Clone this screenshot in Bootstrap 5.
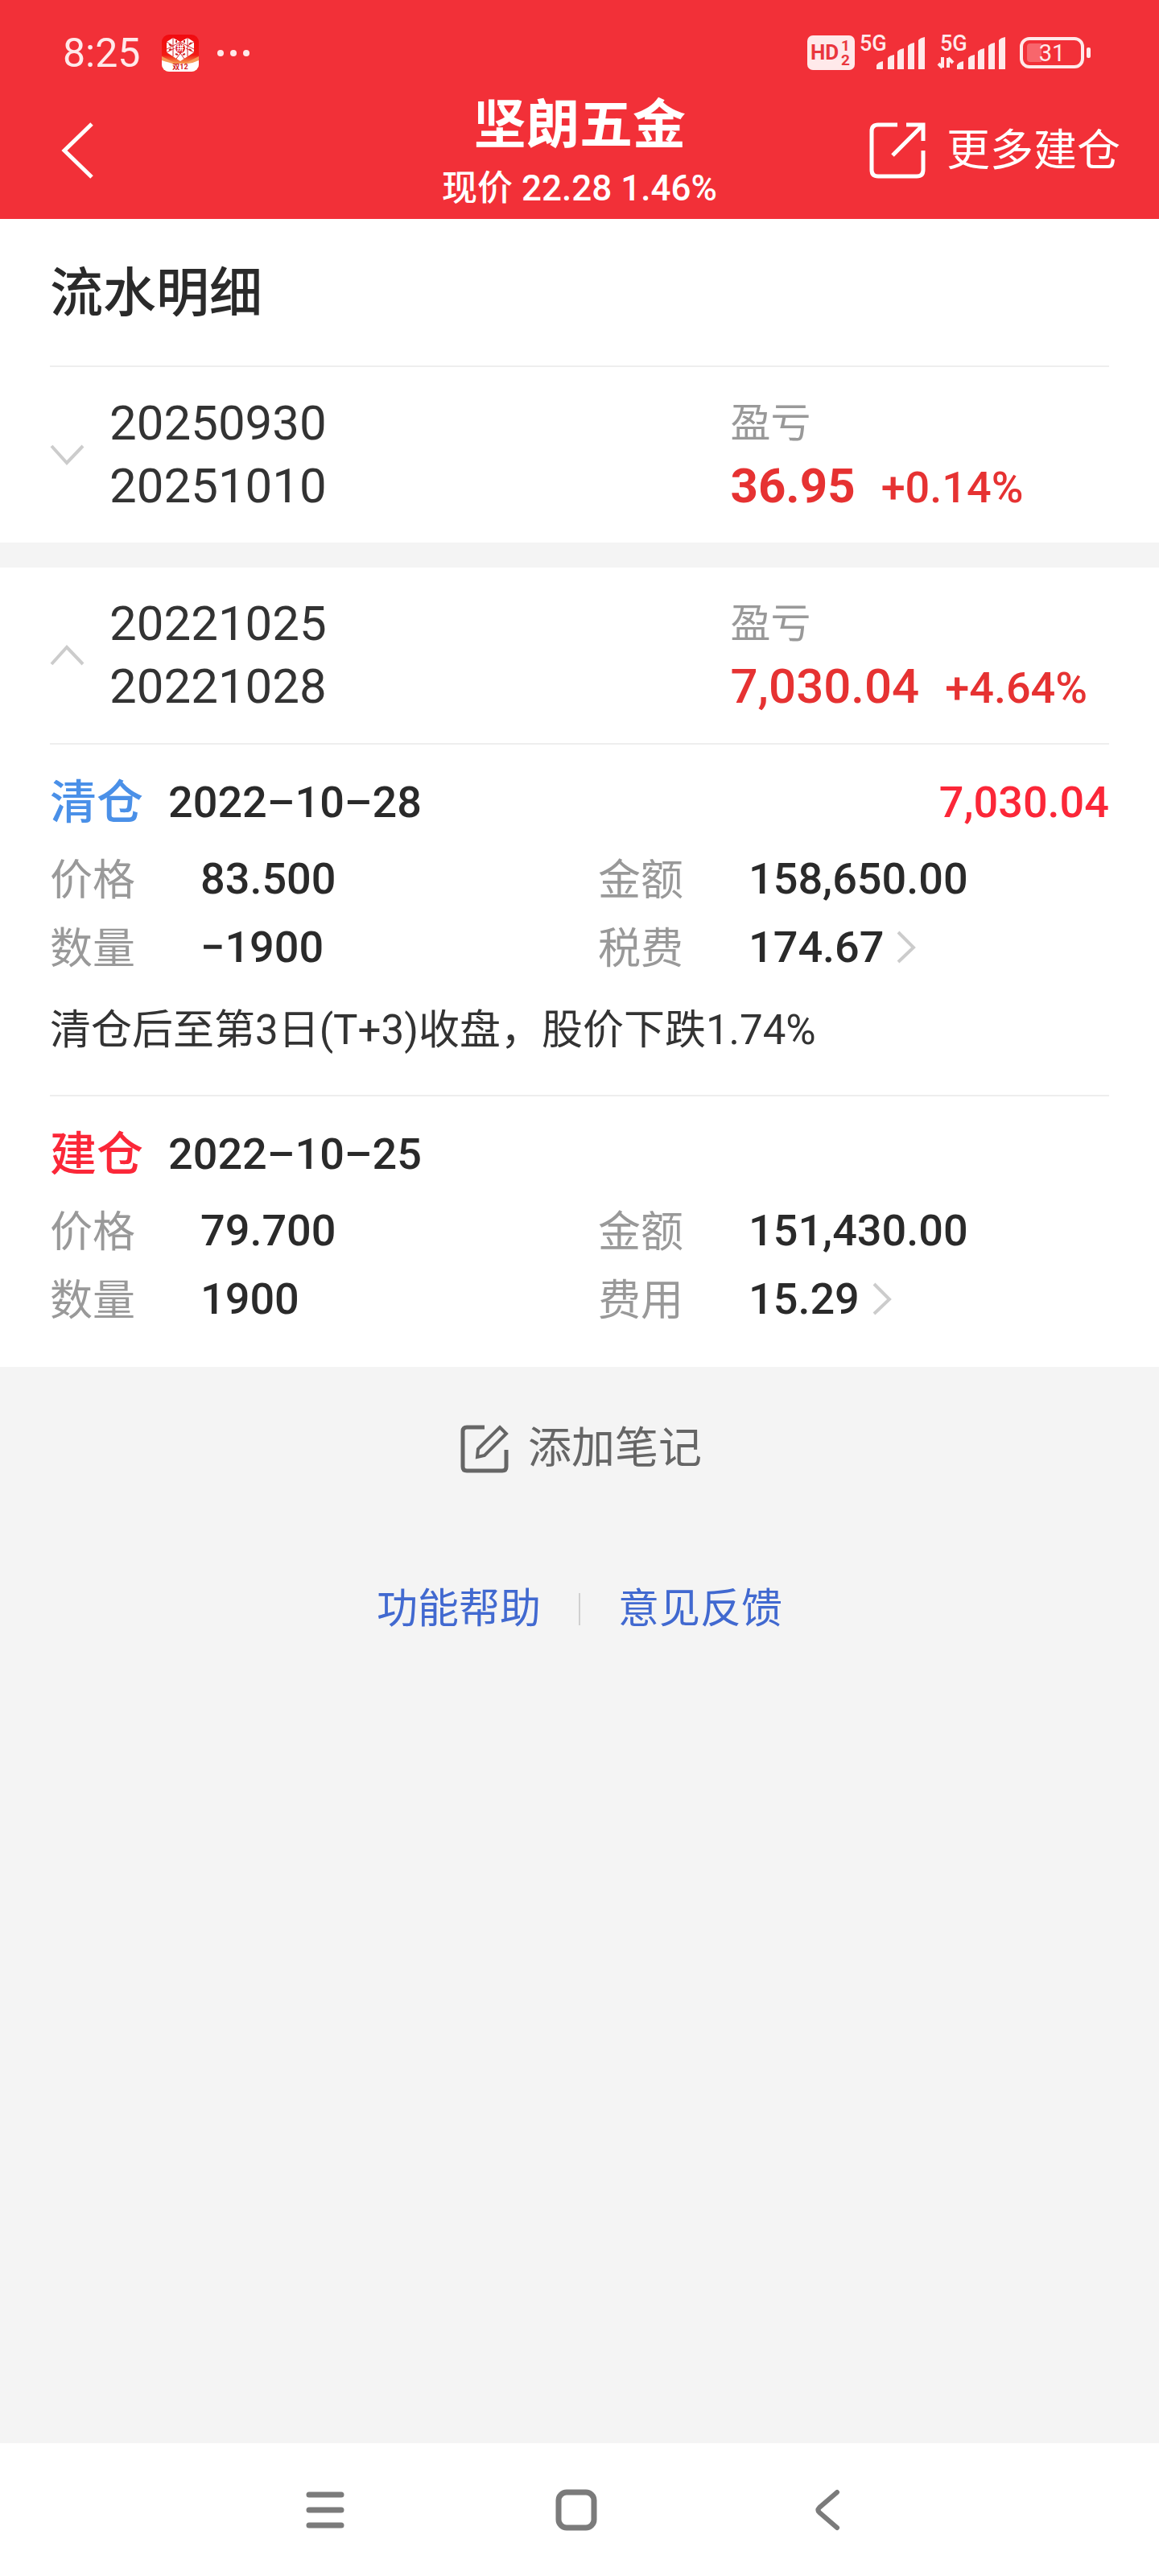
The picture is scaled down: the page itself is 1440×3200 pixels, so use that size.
<!DOCTYPE html>
<html lang="zh-CN">
<head>
<meta charset="utf-8">
<meta name="viewport" content="width=device-width, initial-scale=1">
<title>坚朗五金 流水明细</title>
<link rel="stylesheet" href="https://cdn.jsdelivr.net/npm/bootstrap@5.3.0/dist/css/bootstrap.min.css">
<style>
  body { font-family: Roboto, "Noto Sans CJK SC", sans-serif; background: #f4f4f4; color: #2a2a2a; }
  svg { display: block; flex: none; }
  .fig { font-weight: 500; }
  .app-head { background: #f23038; color: #fff; }
  .status { height: 114px; padding: 18px 85px 0 78px; font-size: 50px; color: #ffe9ea; }
  .status-left { gap: 27px; }
  .title-row { display: grid; grid-template-columns: 1fr auto 1fr; height: 158px; padding: 0 48px; }
  .title-row .btn { padding: 0 0 12px; color: #fff; }
  .title-row .back-btn { margin-left: 28px; }
  .title-row .more-btn { font-size: 54px; gap: 26px; }
  .stock-name { font-size: 66px; line-height: 82px; }
  .stock-price { font-size: 44px; line-height: 74px; }
  .gutter { padding-left: 62px; padding-right: 62px; }
  .ruled { border-bottom: 2px solid #eee; }
  .page-title { font-size: 66px; line-height: 178px; padding-top: 4px; }
  .period { padding-top: 31px; padding-bottom: 31px; line-height: 78px; }
  .period .period-main { width: 64.25%; gap: 31px; font-size: 60px; line-height: 78px; color: #333; }
  .dim { color: #999; }
  .profit { color: #e63232; font-size: 60px; height: 78px; gap: 32px; }
  .caption-text { font-size: 50px; }
  .figure-text { font-size: 54px; }
  .band { height: 31px; }
  .trade { padding-top: 20px; padding-bottom: 42px; }
  .trade-head { line-height: 104px; gap: 31px; }
  .trade-kind { font-size: 58px; }
  .sell { color: #4a90e8; }
  .buy { color: #fb2738; }
  .pair { line-height: 85px; }
  .pair-a { width: 51.75%; }
  .pair dt { width: 187px; font-size: 53px; line-height: 80px; padding-top: 5px; }
  .pair dd { font-size: 54px; gap: 16px; }
  .remark { font-size: 51px; line-height: 77px; margin-top: 22px; color: #333; }
  .note-btn.btn { font-size: 54px; line-height: 80px; gap: 24px; color: #666; margin-top: 62px; padding: 0 0 0 4px; }
  .help { font-size: 51px; line-height: 80px; margin-top: 119px; gap: 47px; }
  .help a { color: #4169d0; }
  .help-sep { width: 2px; height: 40px; background: #d0d0d0; }
  .sysnav { height: 165px; gap: 240px; padding-right: 8px; }
  .sysnav .btn { width: 72px; }
</style>
</head>
<body class="min-vh-100 d-flex flex-column">

<header class="app-head">
  <div class="status d-flex align-items-center justify-content-between">
    <div class="status-left d-flex align-items-center">
      <span>8:25</span>
      <svg width="110" height="46" viewBox="0 0 110 46" aria-hidden="true">
        <defs>
          <linearGradient id="glow" x1="0" y1="0" x2="0" y2="1"><stop offset="0" stop-color="#f10a10"/><stop offset=".55" stop-color="#f21a14"/><stop offset=".75" stop-color="#f58a45"/></linearGradient>
          <clipPath id="tile"><rect width="46" height="46" rx="9"/></clipPath>
        </defs>
        <g clip-path="url(#tile)">
          <rect width="46" height="46" fill="url(#glow)"/>
          <path d="M0 27L16 35H30L46 27V46H0Z" fill="#f79a58"/>
          <path d="M0 32Q10 35 14 36H32Q40 35 46 32V46H0Z" fill="#fff"/>
          <path d="M14 4L23 9L32 4L40 9V22L23 33L6 22V9Z" fill="#fff"/>
          <path d="M14 4V14L6 18M6 9L14 14L23 9V13M32 4V14L40 18M40 9L32 14L23 9M14 14V27M32 14V27M6 22L16 17M40 22L30 17M18 30L23 23L28 30" fill="none" stroke="#d8252b" stroke-width="1"/>
          <path d="M9 12l3 2M18 7v3M28 7v3M34 12l3-2M9 19l3-1M34 18l3 2M17 24l3 1M26 25l3-1" stroke="#c22" stroke-width="2"/>
          <circle cx="23" cy="17" r="6" fill="#e02028"/>
          <text x="23" y="20" font-size="9" font-weight="700" text-anchor="middle" fill="#fff">拼</text>
          <text x="23" y="43" font-size="9" font-weight="700" text-anchor="middle" fill="#d01820">双12</text>
        </g>
        <g fill="#ffe9ea"><circle cx="73" cy="23" r="4"/><circle cx="89" cy="23" r="4"/><circle cx="105" cy="23" r="4"/></g>
      </svg>
    </div>
    <svg width="352" height="66" viewBox="0 -10 352 66" fill="#ffe9ea" role="img" aria-label="HD 5G 5G 31%">
      <rect y="1" width="59" height="43" rx="7"/>
      <g fill="#ea363d" font-weight="700"><text x="4" y="31" font-size="26">HD</text><text x="42" y="20" font-size="19">1</text><text x="42" y="38" font-size="19">2</text></g>
      <g font-size="27" font-weight="500"><text x="65" y="20">5G</text><text x="165" y="20">5G</text></g>
      <g id="bars">
        <path d="M86 43V38Q88 34 94 33V43ZM100 43V29Q102 26 108 25V43ZM112 43V21Q114 18 120 17V43ZM125 43V14Q127 11 133 10V43ZM138 43V7Q140 4 146 3V43Z"/>
      </g>
      <use href="#bars" x="100"/>
      <path d="M168 28V41M168 41L163 36M175 41V29M175 29L181 35" fill="none" stroke="#ffe9ea" stroke-width="4"/>
      <rect x="266" y="5" width="76" height="35" rx="10" fill="none" stroke="#ffe9ea" stroke-width="4"/>
      <path d="M277 11H291V34H277Q273 34 273 30V15Q273 11 277 11Z" fill="#f8666c"/>
      <rect x="347" y="16" width="5" height="13" rx="2"/>
      <text x="304" y="33" font-size="29" text-anchor="middle">31</text>
    </svg>
  </div>
  <div class="title-row align-items-center">
    <button type="button" class="btn border-0 back-btn me-auto" aria-label="返回">
      <svg width="40" height="70" viewBox="0 0 40 70" fill="none" stroke="#fff" stroke-width="5"><path d="M38 2L4 35L38 68"/></svg>
    </button>
    <div class="text-center">
      <h1 class="stock-name fw-bold mb-0">坚朗五金</h1>
      <div class="stock-price fig">现价 22.28 1.46%</div>
    </div>
    <button type="button" class="btn border-0 more-btn d-flex align-items-center ms-auto text-nowrap">
      <svg width="70" height="70" viewBox="0 0 70 70" fill="none" stroke="#fff" stroke-width="5"><path d="M35 3H11Q3 3 3 11V59Q3 67 11 67H59Q67 67 67 59V35M46 3H67V23M67 3L29 41"/></svg>
      <span>更多建仓</span>
    </button>
  </div>
</header>

<main class="flex-grow-1">
  <section class="bg-white">
    <div class="gutter">
      <h2 class="page-title ruled mb-0 fig">流水明细</h2>
      <div class="period d-flex">
        <button type="button" class="btn border-0 p-0 period-main d-flex align-items-center text-start" aria-expanded="false">
          <svg width="43" height="26" viewBox="0 0 43 26" fill="none" stroke="#ccc" stroke-width="4"><path d="M2 2L21 23L41 2"/></svg>
          <span>20250930<br>20251010</span>
        </button>
        <div>
          <div class="caption-text dim">盈亏</div>
          <div class="profit d-flex align-items-baseline"><b>36.95</b><span class="figure-text fig">+0.14%</span></div>
        </div>
      </div>
    </div>
  </section>

  <div class="band"></div>

  <section class="bg-white">
    <div class="gutter">
      <div class="period d-flex ruled">
        <button type="button" class="btn border-0 p-0 period-main d-flex align-items-center text-start" aria-expanded="true">
          <svg width="43" height="26" viewBox="0 0 43 26" fill="none" stroke="#ccc" stroke-width="4"><path d="M2 24L21 3L41 24"/></svg>
          <span>20221025<br>20221028</span>
        </button>
        <div>
          <div class="caption-text dim">盈亏</div>
          <div class="profit d-flex align-items-baseline"><b class="fig">7,030.04</b><span class="figure-text fig">+4.64%</span></div>
        </div>
      </div>

      <article class="trade ruled">
        <div class="trade-head d-flex align-items-center">
          <span class="trade-kind sell fig">清仓</span>
          <span class="figure-text fig">2022–10–28</span>
          <span class="figure-text buy ms-auto fig">7,030.04</span>
        </div>
        <dl class="pair d-flex mb-0">
          <div class="pair-a d-flex"><dt class="dim fw-normal">价格</dt><dd class="mb-0 fig">83.500</dd></div>
          <div class="d-flex"><dt class="dim fw-normal">金额</dt><dd class="mb-0 fig">158,650.00</dd></div>
        </dl>
        <dl class="pair d-flex mb-0">
          <div class="pair-a d-flex"><dt class="dim fw-normal">数量</dt><dd class="mb-0 fig">−1900</dd></div>
          <div class="d-flex"><dt class="dim fw-normal">税费</dt><dd class="mb-0 d-flex align-items-center fig">174.67
            <svg width="24" height="41" viewBox="0 0 24 41" fill="none" stroke="#ccc" stroke-width="4"><path d="M2 2L21 21L2 39"/></svg></dd></div>
        </dl>
        <p class="remark mb-0">清仓后至第3日(T+3)收盘，股价下跌1.74%</p>
      </article>

      <article class="trade">
        <div class="trade-head d-flex align-items-center">
          <span class="trade-kind buy fig">建仓</span>
          <span class="figure-text fig">2022–10–25</span>
        </div>
        <dl class="pair d-flex mb-0">
          <div class="pair-a d-flex"><dt class="dim fw-normal">价格</dt><dd class="mb-0 fig">79.700</dd></div>
          <div class="d-flex"><dt class="dim fw-normal">金额</dt><dd class="mb-0 fig">151,430.00</dd></div>
        </dl>
        <dl class="pair d-flex mb-0">
          <div class="pair-a d-flex"><dt class="dim fw-normal">数量</dt><dd class="mb-0 fig">1900</dd></div>
          <div class="d-flex"><dt class="dim fw-normal">费用</dt><dd class="mb-0 d-flex align-items-center fig">15.29
            <svg width="24" height="41" viewBox="0 0 24 41" fill="none" stroke="#ccc" stroke-width="4"><path d="M2 2L21 21L2 39"/></svg></dd></div>
        </dl>
      </article>
    </div>
  </section>

  <button type="button" class="btn border-0 note-btn d-flex align-items-center mx-auto">
    <svg width="60" height="60" viewBox="0 0 60 60" fill="none" stroke="#666" stroke-width="5"><path d="M30 3H8Q3 3 3 8V52Q3 57 8 57H52Q57 57 57 52V31"/><path d="M49 3L57 11L30 38L21 40L22 30Z" stroke-width="4"/></svg>
    <span>添加笔记</span>
  </button>
  <nav class="help d-flex justify-content-center align-items-center">
    <a class="text-decoration-none" href="#help">功能帮助</a>
    <span class="help-sep"></span>
    <a class="text-decoration-none" href="#feedback">意见反馈</a>
  </nav>
</main>

<footer class="sysnav bg-white d-flex justify-content-center align-items-center">
  <button type="button" class="btn border-0 p-0" aria-label="最近任务"><svg class="mx-auto" width="48" height="52" viewBox="0 0 48 52" stroke="#7b7b7b" stroke-width="7" stroke-linecap="round"><path d="M4 7H44M4 26H44M4 45H44"/></svg></button>
  <button type="button" class="btn border-0 p-0" aria-label="主屏幕"><svg class="mx-auto" width="52" height="52" viewBox="0 0 52 52" fill="none" stroke="#7b7b7b" stroke-width="7"><rect x="4" y="4" width="44" height="44" rx="10"/></svg></button>
  <button type="button" class="btn border-0 p-0" aria-label="返回"><svg class="mx-auto" width="32" height="52" viewBox="0 0 32 52" fill="none" stroke="#7b7b7b" stroke-width="6" stroke-linecap="round"><path d="M28 4L6 23Q3 26 6 29L28 48"/></svg></button>
</footer>

<script src="https://cdn.jsdelivr.net/npm/bootstrap@5.3.0/dist/js/bootstrap.bundle.min.js"></script>
</body>
</html>
